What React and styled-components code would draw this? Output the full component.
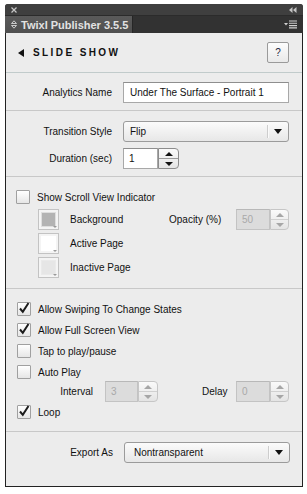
import React from 'react';
import styled, { createGlobalStyle } from 'styled-components';

const GlobalStyle = createGlobalStyle`
  html, body {
    margin: 0;
    padding: 0;
    background: #fff;
  }
  body {
    font-family: "Liberation Sans", Arial, sans-serif;
    font-size: 10px;
    color: #111;
  }
`;

const Window = styled.div`
  margin: 4px 0 0 5px;
  width: 298px;
  background: #3d3d3d;
  border-radius: 3px 3px 0 0;
  overflow: hidden;
`;

const TitleBar = styled.div`
  height: 11px;
  display: flex;
  align-items: center;
  justify-content: space-between;
  padding: 0 6px;
  background: #3f3f3f;
`;

const TabRow = styled.div`
  height: 18px;
  display: flex;
  align-items: stretch;
  background: #323232;
  border-top: 1px solid #2b2b2b;
  box-sizing: border-box;
`;

const Tab = styled.div`
  width: 128px;
  display: flex;
  align-items: center;
  gap: 4px;
  padding-left: 6px;
  box-sizing: border-box;
  background: linear-gradient(#5a5a5a, #4f4f4f);
  border-right: 1px solid #262626;
  color: #e2e2e2;
  font-weight: bold;
  font-size: 11px;
  white-space: nowrap;
`;

const MenuButton = styled.div`
  margin-left: auto;
  margin-right: 6px;
  display: flex;
  align-items: center;
`;

const Panel = styled.div`
  background: #ececec;
  border: 1px solid #222;
  border-top: none;
`;

const Header = styled.div`
  height: 39px;
  display: flex;
  align-items: center;
  padding: 0 13px 0 12px;
  border-bottom: 1px solid #c1cbcb;
`;

const BackArrow = styled.span`
  width: 0;
  height: 0;
  border-top: 4px solid transparent;
  border-bottom: 4px solid transparent;
  border-right: 6px solid #111;
  margin-right: 9px;
`;

const Title = styled.span`
  font-weight: bold;
  font-size: 10px;
  letter-spacing: 2.4px;
  flex: 1;
`;

const HelpButton = styled.div`
  width: 22px;
  height: 21px;
  box-sizing: border-box;
  border: 1px solid #9a9a9a;
  border-radius: 2px;
  background: linear-gradient(#fdfdfd, #e9e9e9);
  display: flex;
  align-items: center;
  justify-content: center;
  font-size: 10px;
  color: #1d2540;
`;

const Section = styled.div`
  padding: ${p => p.$pad};
  border-bottom: ${p => (p.$last ? 'none' : '1px solid #c8c8c8')};
  display: flex;
  flex-direction: column;
  gap: ${p => p.$gap || 0}px;
`;

const Row = styled.div`
  display: flex;
  align-items: center;
  height: 21px;
  margin-top: ${p => p.$mt || 0}px;
  padding-right: ${p => p.$pr || 0}px;
`;

const Label = styled.span`
  width: ${p => p.$w || 106}px;
  flex: none;
  text-align: right;
  margin-right: ${p => (p.$gap === undefined ? 11 : p.$gap)}px;
  margin-left: ${p => (p.$auto ? 'auto' : '0')};
  white-space: nowrap;
`;

const TextBox = styled.div`
  width: 166px;
  height: 21px;
  box-sizing: border-box;
  border: 1px solid #a8a8a8;
  border-top-color: #8e8e8e;
  background: #fff;
  display: flex;
  align-items: center;
  padding: 0 6px;
`;

const Select = styled.div`
  width: 166px;
  height: 21px;
  box-sizing: border-box;
  border: 1px solid #9b9b9b;
  border-radius: 3px;
  background: linear-gradient(#fbfbfb, #e7e7e7);
  display: flex;
  align-items: center;
  padding-left: ${p => p.$pl || 6}px;
`;

const SelectText = styled.span`
  flex: 1;
`;

const SelectDivider = styled.span`
  width: 1px;
  height: 13px;
  background: #cdcdcd;
  box-shadow: 1px 0 0 #fafafa;
`;

const SelectArrow = styled.span`
  width: 20px;
  display: flex;
  justify-content: center;
  &::after {
    content: '';
    border-left: 4px solid transparent;
    border-right: 4px solid transparent;
    border-top: 5px solid #111;
  }
`;

const NumberField = styled.div`
  display: flex;
  height: 21px;
`;

const NumberInput = styled.div`
  width: ${p => p.$w || 34}px;
  box-sizing: border-box;
  border: 1px solid ${p => (p.$disabled ? '#c3c3c3' : '#a8a8a8')};
  border-top-color: ${p => (p.$disabled ? '#b8b8b8' : '#8e8e8e')};
  background: ${p => (p.$disabled ? '#dcdcdc' : '#fff')};
  color: ${p => (p.$disabled ? '#a9a9a9' : '#111')};
  display: flex;
  align-items: center;
  padding-left: 5px;
`;

const Spinner = styled.div`
  width: ${p => p.$w || 20}px;
  box-sizing: border-box;
  border: 1px solid ${p => (p.$disabled ? '#c6c6c6' : '#8c8c8c')};
  border-radius: 0 4px 4px 0;
  background: linear-gradient(#fafafa, #e4e4e4);
  display: flex;
  flex-direction: column;
`;

const SpinHalf = styled.div`
  flex: 1;
  display: flex;
  align-items: center;
  justify-content: center;
  border-top: ${p => (p.$down ? `1px solid ${p.$disabled ? '#d0d0d0' : '#9a9a9a'}` : 'none')};
  &::after {
    content: '';
    border-left: 4px solid transparent;
    border-right: 4px solid transparent;
    ${p => (p.$down ? 'border-top' : 'border-bottom')}: 4px solid ${p => (p.$disabled ? '#a6a6a6' : '#111')};
  }
`;

const CheckRow = styled.label`
  display: flex;
  align-items: center;
  gap: 7px;
  height: 14px;
  margin-top: ${p => p.$mt || 0}px;
`;

const Box = styled.span`
  width: 14px;
  height: 14px;
  box-sizing: border-box;
  border: 1px solid #a0a0a0;
  border-radius: 1px;
  background: linear-gradient(#ffffff, #e6e6e6);
  display: flex;
  align-items: center;
  justify-content: center;
  flex: none;
`;

const SwatchRow = styled.div`
  display: flex;
  align-items: center;
  height: 21px;
  padding-left: ${p => p.$indent}px;
`;

const Swatch = styled.span`
  position: relative;
  width: 21px;
  height: 21px;
  box-sizing: border-box;
  border: 1px solid #c3c3c3;
  background: #f4f4f4;
  padding: 2px;
  flex: none;
  &::before {
    content: '';
    display: block;
    width: 100%;
    height: 100%;
    background: ${p => p.$color};
    border: 1px solid ${p => p.$edge || '#e2e2e2'};
    box-sizing: border-box;
  }
  &::after {
    content: '';
    position: absolute;
    right: 1px;
    bottom: 1px;
    border-left: 2px solid transparent;
    border-right: 2px solid transparent;
    border-top: 2px solid #999;
  }
`;

const SwatchLabel = styled.span`
  margin-left: 11px;
  flex: 1;
`;

const Close = () => (
  <svg width="6" height="6" viewBox="0 0 6 6">
    <path d="M0.5 0.5 L5.5 5.5 M5.5 0.5 L0.5 5.5" stroke="#c8c8c8" strokeWidth="1.2" />
  </svg>
);

const Collapse = () => (
  <svg width="8" height="6" viewBox="0 0 8 6">
    <path d="M3.5 0 L0 3 L3.5 6 Z M7.5 0 L4 3 L7.5 6 Z" fill="#c4c4c4" />
  </svg>
);

const UpDown = () => (
  <svg width="6" height="9" viewBox="0 0 6 9">
    <path d="M0.5 3.5 L3 0.8 L5.5 3.5 Z M0.5 5.5 L3 8.2 L5.5 5.5 Z" fill="none" stroke="#d8d8d8" strokeWidth="0.9" />
  </svg>
);

const Menu = () => (
  <svg width="13" height="9" viewBox="0 0 13 9">
    <path d="M0 3 L4 3 L2 5.5 Z" fill="#d0d0d0" />
    <path d="M5 1 H13 M5 3.3 H13 M5 5.6 H13 M5 7.9 H13" stroke="#d0d0d0" strokeWidth="1.1" />
  </svg>
);

const Tick = () => (
  <svg width="12" height="12" viewBox="0 0 12 12" style={{ marginTop: -2 }}>
    <path d="M2 6.5 L4.8 9.8 L10.5 1" fill="none" stroke="#1c1c1c" strokeWidth="2" />
  </svg>
);

const Check = ({ checked, label, mt }) => (
  <CheckRow $mt={mt}>
    <Box>{checked && <Tick />}</Box>
    <span>{label}</span>
  </CheckRow>
);

const Number = ({ value, disabled, w, sw }) => (
  <NumberField>
    <NumberInput $disabled={disabled} $w={w}>{value}</NumberInput>
    <Spinner $disabled={disabled} $w={sw}>
      <SpinHalf $disabled={disabled} />
      <SpinHalf $down $disabled={disabled} />
    </Spinner>
  </NumberField>
);

const Dropdown = ({ value, pl }) => (
  <Select $pl={pl}>
    <SelectText>{value}</SelectText>
    <SelectDivider />
    <SelectArrow />
  </Select>
);

export default function App() {
  return (
    <>
      <GlobalStyle />
      <Window>
        <TitleBar>
          <Close />
          <Collapse />
        </TitleBar>
        <TabRow>
          <Tab>
            <UpDown />
            <span>Twixl Publisher 3.5.5</span>
          </Tab>
          <MenuButton>
            <Menu />
          </MenuButton>
        </TabRow>
        <Panel>
          <Header>
            <BackArrow />
            <Title>SLIDE SHOW</Title>
            <HelpButton>?</HelpButton>
          </Header>

          <Section $pad="9px 0 7px">
            <Row>
              <Label>Analytics Name</Label>
              <TextBox>Under The Surface - Portrait 1</TextBox>
            </Row>
          </Section>

          <Section $pad="10px 0 7px" $gap={6}>
            <Row>
              <Label>Transition Style</Label>
              <Dropdown value="Flip" />
            </Row>
            <Row>
              <Label>Duration (sec)</Label>
              <Number value="1" w={35} sw={21} />
            </Row>
          </Section>

          <Section $pad="13px 13px 10px 10px">
            <Check label="Show Scroll View Indicator" />
            <SwatchRow $indent={22} style={{ marginTop: 5 }}>
              <Swatch $color="#b3b3b3" $edge="#dedede" />
              <SwatchLabel>Background</SwatchLabel>
              <Label $w={53} $gap={14} style={{ textAlign: 'left' }}>Opacity (%)</Label>
              <Number value="50" disabled w={34} sw={19} />
            </SwatchRow>
            <SwatchRow $indent={22} style={{ marginTop: 3 }}>
              <Swatch $color="#ffffff" $edge="#ffffff" />
              <SwatchLabel>Active Page</SwatchLabel>
            </SwatchRow>
            <SwatchRow $indent={22} style={{ marginTop: 3 }}>
              <Swatch $color="#e6e6e6" $edge="#eaeaea" />
              <SwatchLabel>Inactive Page</SwatchLabel>
            </SwatchRow>
          </Section>

          <Section $pad="13px 0 12px 11px">
            <Check checked label="Allow Swiping To Change States" />
            <Check checked label="Allow Full Screen View" mt={7} />
            <Check label="Tap to play/pause" mt={7} />
            <Check label="Auto Play" mt={7} />
            <Row $mt={2} $pr={13}>
              <Label $w={76} $gap={12}>Interval</Label>
              <Number value="3" disabled w={33} sw={20} />
              <Label $w={25} $gap={9} $auto>Delay</Label>
              <Number value="0" disabled w={34} sw={19} />
            </Row>
            <Check checked label="Loop" mt={3} />
          </Section>

          <Section $pad="10px 0 23px" $last>
            <Row>
              <Label $w={107} $gap={11}>Export As</Label>
              <Dropdown value="Nontransparent" pl={9} />
            </Row>
          </Section>
        </Panel>
      </Window>
    </>
  );
}
